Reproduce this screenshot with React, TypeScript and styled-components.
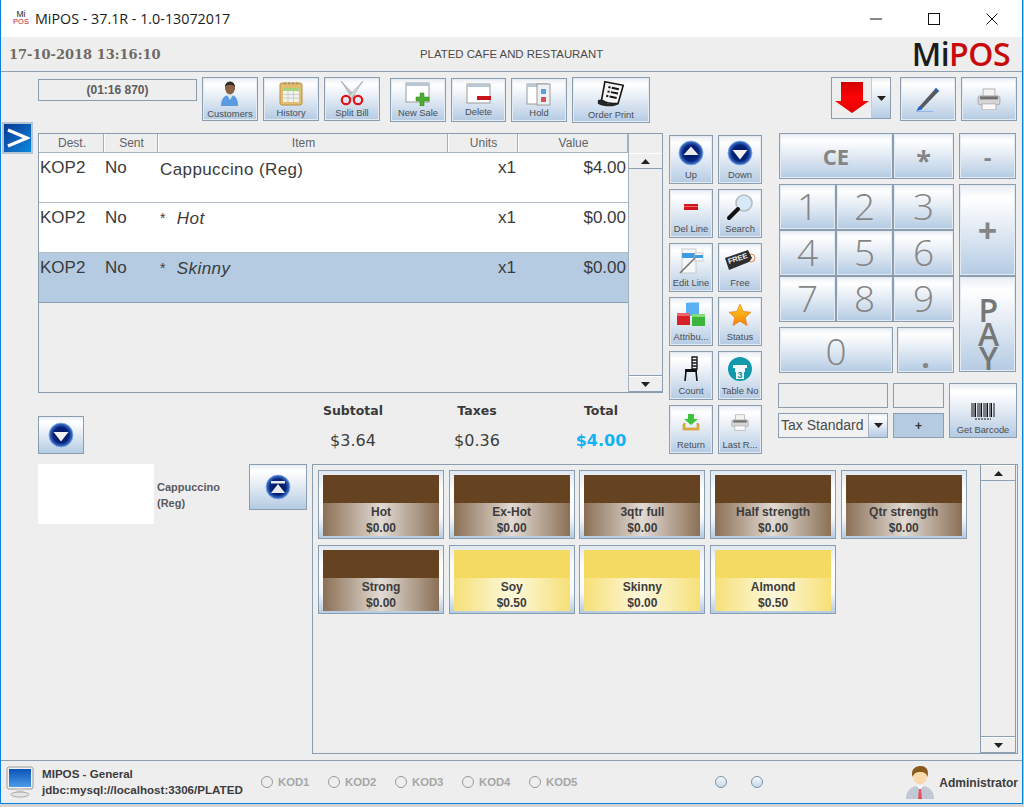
import styled, { createGlobalStyle } from "styled-components";

const GlobalStyle = createGlobalStyle`
  html, body {
    margin: 0;
    padding: 0;
    background: #d4d4d4;
    overflow: hidden;
  }
  * {
    box-sizing: border-box;
  }
`;

const blueGradient = `linear-gradient(180deg, #e9eef4 0%, #ffffff 14%, #e6edf5 45%, #b4cbe3 100%)`;
const edge = "#8b9eb0";

// ---------- icons ----------
function Orb({ dir }: { dir: "up" | "down" | "top" }) {
  return (
    <svg width="26" height="26" viewBox="0 0 26 26">
      <defs>
        <radialGradient id={`orb-${dir}`} cx="0.5" cy="0.5" r="0.55">
          <stop offset="0" stopColor="#02125a" />
          <stop offset="0.6" stopColor="#06247c" />
          <stop offset="1" stopColor="#5a9bf0" />
        </radialGradient>
      </defs>
      <circle cx="13" cy="13" r="12" fill={`url(#orb-${dir})`} stroke="#7da6e6" strokeWidth="0.8" />
      {dir === "up" && <path d="M13 6.5 L20.5 15 H5.5 Z" fill="#e9e9e9" />}
      {dir === "down" && <path d="M13 19.5 L20.5 10 H5.5 Z" fill="#f2f2f2" />}
      {dir === "top" && (
        <>
          <rect x="6" y="7" width="14" height="2.5" fill="#e9e9e9" />
          <path d="M13 10 L20 19 H6 Z" fill="#e9e9e9" />
        </>
      )}
    </svg>
  );
}

function CustomerIcon() {
  return (
    <svg width="24" height="28" viewBox="0 0 24 28">
      <path d="M3 27 C3 19 7 16 12 16 C17 16 20 19 20 27 Z" fill="#5a9ade" />
      <path d="M9 16 L12 21 L15 16 Z" fill="#d7e6f5" />
      <ellipse cx="12" cy="9" rx="5" ry="6.5" fill="#8c6244" />
      <path d="M7 8 C7 1 17 1 17 8 C15 5 9 5 7 8 Z" fill="#2e2a28" />
    </svg>
  );
}

function HistoryIcon() {
  return (
    <svg width="24" height="25" viewBox="0 0 24 25">
      <rect x="1" y="2" width="22" height="22" rx="2" fill="#e2bd70" stroke="#b88f45" />
      <rect x="4" y="7" width="16" height="14" fill="#f4f2e4" />
      <rect x="4" y="7" width="16" height="3" fill="#a6d37d" />
      <path d="M4 13.5 H20 M4 17 H20 M9 10 V21 M14.5 10 V21" stroke="#b8c7d8" strokeWidth="0.8" />
      <path d="M6 1 V4 M10 1 V4 M14 1 V4 M18 1 V4" stroke="#9b8a66" strokeWidth="1" />
    </svg>
  );
}

function ScissorsIcon() {
  return (
    <svg width="26" height="26" viewBox="0 0 26 26">
      <path d="M2 1 L17 17 L13.5 18.5 Z" fill="#c4c8cc" stroke="#85898d" strokeWidth="0.5" />
      <path d="M24 1 L9 17 L12.5 18.5 Z" fill="#d8dbde" stroke="#85898d" strokeWidth="0.5" />
      <circle cx="7" cy="20" r="4.2" fill="none" stroke="#e0141a" strokeWidth="2.2" />
      <circle cx="19" cy="20" r="4.2" fill="none" stroke="#e0141a" strokeWidth="2.2" />
    </svg>
  );
}

function WindowPlusIcon() {
  return (
    <svg width="26" height="24" viewBox="0 0 26 24">
      <rect x="1" y="1" width="23" height="19" fill="#fff" stroke="#9a9a9a" />
      <rect x="1" y="1" width="23" height="3" fill="#b9c6d4" />
      <path d="M15 11 H19 V15 H24 V19 H19 V24 H15 V19 H11 V15 H15 Z" fill="#4cae32" stroke="#2f7d1d" strokeWidth="0.5" />
    </svg>
  );
}

function WindowMinusIcon() {
  return (
    <svg width="26" height="22" viewBox="0 0 26 22">
      <rect x="1" y="1" width="23" height="19" fill="#fff" stroke="#9a9a9a" />
      <rect x="1" y="1" width="23" height="3" fill="#b9c6d4" />
      <rect x="11" y="13" width="14" height="4" fill="#c8141c" />
    </svg>
  );
}

function HoldIcon() {
  return (
    <svg width="26" height="24" viewBox="0 0 26 24">
      <rect x="1" y="2" width="20" height="20" fill="#fff" stroke="#9a9a9a" />
      <rect x="1" y="2" width="23" height="3" fill="#b9c6d4" />
      <rect x="11" y="2" width="13" height="21" fill="#eef1f4" stroke="#9a9a9a" />
      <rect x="15" y="7" width="5" height="5" fill="#5aa0dc" />
      <rect x="15" y="15" width="5" height="5" fill="#d8505a" />
    </svg>
  );
}

function ReceiptIcon() {
  return (
    <svg width="30" height="28" viewBox="0 0 32 32">
      <path d="M9 2 L30 6 L24 27 C18 27 10 26 5 24 Z" fill="#f5f5f5" stroke="#151515" strokeWidth="1.8" />
      <path d="M1 23 C6 21 10 24 12 27 L24 27 C22 31 8 31 1 27 Z" fill="#252525" />
      <path d="M13 8 L25 10.5 M12 13 L24 15.5 M10.5 18 L22.5 20.5" stroke="#151515" strokeWidth="2.2" strokeDasharray="2.5 1.5 9 0" />
    </svg>
  );
}

function RedArrow() {
  return (
    <svg width="34" height="32" viewBox="0 0 34 32">
      <defs>
        <linearGradient id="red-arrow" x1="0" y1="0" x2="0" y2="1">
          <stop offset="0" stopColor="#d30000" />
          <stop offset="0.5" stopColor="#fb0505" />
          <stop offset="1" stopColor="#e50000" />
        </linearGradient>
      </defs>
      <path d="M6 0 H28 V19 H34 L17 31 L0 19 H6 Z" fill="url(#red-arrow)" />
    </svg>
  );
}

function PencilIcon() {
  return (
    <svg width="26" height="26" viewBox="0 0 26 26">
      <path d="M3 22 L21 2 L24 5 L6 24 Z" fill="#565b63" />
      <path d="M21 2 L24 5 L22.5 6.5 L19.5 3.6 Z" fill="#1f62c8" />
      <path d="M3 22 L5 20 L6.5 23.5 L1.5 25 Z" fill="#1f62d8" />
      <path d="M1 25.4 H18" stroke="#8db2ea" strokeWidth="1" />
    </svg>
  );
}

function PrinterIcon({ size }: { size: number }) {
  return (
    <svg width={size} height={size * 0.95} viewBox="0 0 24 23">
      <rect x="6" y="1" width="12" height="8" fill="#f3f3f3" stroke="#b5b5b5" />
      <rect x="1" y="8" width="22" height="9" rx="2" fill="#d5d5d5" stroke="#a8a8a8" />
      <rect x="3" y="8.5" width="18" height="3" fill="#6f6f6f" />
      <rect x="5" y="16" width="14" height="6" fill="#fafafa" stroke="#b5b5b5" />
    </svg>
  );
}

function DelLineIcon() {
  return (
    <svg width="16" height="8" viewBox="0 0 16 8">
      <rect x="1" y="1" width="14" height="6" fill="#d3161c" />
      <rect x="1" y="3" width="14" height="1" fill="#f0696d" />
    </svg>
  );
}

function SearchIcon() {
  return (
    <svg width="28" height="28" viewBox="0 0 28 28">
      <circle cx="18" cy="10" r="8" fill="#d6e9f7" stroke="#b8bcc0" strokeWidth="1.6" />
      <path d="M12 16 L3 25" stroke="#111" strokeWidth="4" strokeLinecap="round" />
    </svg>
  );
}

function EditLineIcon() {
  return (
    <svg width="26" height="26" viewBox="0 0 26 26">
      <rect x="4" y="1" width="14" height="24" fill="#f4f6f8" stroke="#c8ccd0" />
      <rect x="4" y="5" width="14" height="5" fill="#3f9be0" />
      <rect x="17" y="5" width="8" height="8" fill="#f4f6f8" stroke="#c8ccd0" />
      <rect x="17" y="7" width="8" height="3" fill="#3f9be0" />
      <path d="M2 25 L17 10" stroke="#777" strokeWidth="1.6" />
    </svg>
  );
}

const TagText = styled.text`
  font-family: "Liberation Sans", Arial, sans-serif;
  font-size: 7.5px;
  font-weight: 700;
  fill: #f2f2f2;
`;

function FreeIcon() {
  return (
    <svg width="32" height="24" viewBox="0 0 32 24">
      <circle cx="27" cy="9" r="4" fill="none" stroke="#e68a4a" strokeWidth="1" />
      <path d="M1 9 L24 1 L28 9 L25 13 L5 21 Z" fill="#2e2e2e" />
      <TagText x="5" y="15" transform="rotate(-18 5 15)">FREE</TagText>
    </svg>
  );
}

function CubesIcon() {
  return (
    <svg width="30" height="26" viewBox="0 0 30 26">
      <rect x="10" y="1" width="13" height="13" fill="#5ab0f0" />
      <path d="M10 1 L14 0 H24 L23 1 Z" fill="#9ad2f8" />
      <rect x="1" y="11" width="13" height="12" fill="#d82028" />
      <rect x="16" y="12" width="13" height="12" fill="#3cb43c" />
      <rect x="1" y="11" width="13" height="3" fill="#f0656b" />
      <rect x="16" y="12" width="13" height="3" fill="#84dc7c" />
    </svg>
  );
}

function StarIcon() {
  return (
    <svg width="24" height="24" viewBox="0 0 24 24">
      <defs>
        <linearGradient id="star-fill" x1="0" y1="0" x2="0" y2="1">
          <stop offset="0" stopColor="#ffd21e" />
          <stop offset="1" stopColor="#f77f0a" />
        </linearGradient>
      </defs>
      <path d="M12 1 L15.3 8.5 L23 9.2 L17.2 14.4 L19 22.5 L12 18.2 L5 22.5 L6.8 14.4 L1 9.2 L8.7 8.5 Z" fill="url(#star-fill)" stroke="#e26d0a" strokeWidth="0.6" />
    </svg>
  );
}

function ChairIcon() {
  return (
    <svg width="18" height="25" viewBox="0 0 18 25">
      <path d="M10 1 H15 V13 H10 Z M10 4 H15 M10 7 H15 M10 10 H15" fill="none" stroke="#111" strokeWidth="1.3" />
      <path d="M3 13 H15 V16 H3 Z" fill="#111" />
      <path d="M4 15 L3 25 M14 15 L15 25" stroke="#111" strokeWidth="1.6" />
    </svg>
  );
}

const BadgeText = styled.text`
  font-family: "Liberation Sans", Arial, sans-serif;
  font-size: 9px;
  font-weight: 700;
  fill: #0e8fa0;
`;

function TableIcon() {
  return (
    <svg width="24" height="24" viewBox="0 0 24 24">
      <circle cx="12" cy="12" r="12" fill="#129aab" />
      <path d="M5 8 H19 V11 H17 V15 H7 V11 H5 Z" fill="#eef8fa" />
      <rect x="8" y="13" width="8" height="9" fill="#eef8fa" />
      <BadgeText x="9.5" y="21">3</BadgeText>
    </svg>
  );
}

function ReturnIcon() {
  return (
    <svg width="18" height="17" viewBox="0 0 18 17">
      <path d="M6 0 H12 V5 H16 L9 11 L2 5 H6 Z" fill="#3dc43a" />
      <path d="M1 10 L3 9 V14 H15 V9 L17 10 V16 H1 Z" fill="#e8b23c" stroke="#b58519" strokeWidth="0.5" />
    </svg>
  );
}

function BarcodeIcon() {
  return (
    <svg width="24" height="17" viewBox="0 0 24 17">
      <path
        d="M1 0 V14 M3 0 V14 M4.5 0 V14 M7 0 V14 M9 0 V14 M10.5 0 V14 M13 0 V14 M15 0 V14 M16.5 0 V14 M19 0 V14 M20.5 0 V14 M23 0 V14"
        stroke="#111"
        strokeWidth="1"
      />
      <path d="M4 16 H20" stroke="#555" strokeWidth="1.5" strokeDasharray="2 1" />
    </svg>
  );
}

function MonitorIcon() {
  return (
    <svg width="28" height="32" viewBox="0 0 28 32">
      <defs>
        <linearGradient id="screen" x1="0" y1="0" x2="0" y2="1">
          <stop offset="0" stopColor="#0b52b8" />
          <stop offset="1" stopColor="#4d9be8" />
        </linearGradient>
      </defs>
      <rect x="1" y="1" width="26" height="22" rx="2" fill="#f2f2f2" stroke="#9a9a9a" />
      <rect x="3" y="3" width="22" height="18" fill="url(#screen)" />
      <path d="M11 23 H17 L18 27 H10 Z" fill="#d5d5d5" />
      <ellipse cx="14" cy="28.5" rx="9" ry="2.5" fill="#e6e6e6" stroke="#a8a8a8" />
    </svg>
  );
}

function AdminIcon() {
  return (
    <svg width="30" height="33" viewBox="0 0 30 33">
      <path d="M1 33 C1 24 6 20 15 20 C24 20 29 24 29 33 Z" fill="#c0c8d6" />
      <path d="M12 20 H18 L15 24 Z" fill="#fff" />
      <path d="M14 23 H16 L17 33 H13 Z" fill="#e8505c" />
      <ellipse cx="15" cy="10" rx="7" ry="8.5" fill="#fbd9ac" />
      <path d="M7.5 11 C5 2 12 0 16 0 C22 0 24 5 22.5 11 C21.5 7 19 5.5 14 6 C10 6.5 9 8 7.5 11 Z" fill="#8a5a1e" />
    </svg>
  );
}

function Caret({ dir = "down" }: { dir?: "up" | "down" }) {
  return (
    <svg width="9" height="5" viewBox="0 0 9 5">
      <path d={dir === "up" ? "M4.5 0 L9 5 H0 Z" : "M4.5 5 L9 0 H0 Z"} fill="#222" />
    </svg>
  );
}

// ---------- data ----------
const topTools = [
  { label: "Customers", icon: <CustomerIcon />, w: 56, h: 44, top: 0 },
  { label: "History", icon: <HistoryIcon />, w: 56, h: 44, top: 0 },
  { label: "Split Bill", icon: <ScissorsIcon />, w: 56, h: 44, top: 0 },
];

const orderTools = [
  { label: "New Sale", icon: <WindowPlusIcon />, w: 56, h: 44, top: 1 },
  { label: "Delete", icon: <WindowMinusIcon />, w: 55, h: 44, top: 1 },
  { label: "Hold", icon: <HoldIcon />, w: 56, h: 44, top: 1 },
  { label: "Order Print", icon: <ReceiptIcon />, w: 78, h: 46, top: 0 },
];

const rows = [
  { name: "Cappuccino (Reg)", value: "$4.00", modifier: false, selected: false },
  { name: "Hot", value: "$0.00", modifier: true, selected: false },
  { name: "Skinny", value: "$0.00", modifier: true, selected: true },
];

const actions = [
  { label: "Up", icon: <Orb dir="up" /> },
  { label: "Down", icon: <Orb dir="down" /> },
  { label: "Del Line", icon: <DelLineIcon /> },
  { label: "Search", icon: <SearchIcon /> },
  { label: "Edit Line", icon: <EditLineIcon /> },
  { label: "Free", icon: <FreeIcon /> },
  { label: "Attribu...", icon: <CubesIcon /> },
  { label: "Status", icon: <StarIcon /> },
  { label: "Count", icon: <ChairIcon /> },
  { label: "Table No", icon: <TableIcon /> },
  { label: "Return", icon: <ReturnIcon /> },
  { label: "Last R...", icon: <PrinterIcon size={18} /> },
];

const products = [
  { name: "Hot", price: "$0.00", tone: "brown" },
  { name: "Ex-Hot", price: "$0.00", tone: "brown" },
  { name: "3qtr full", price: "$0.00", tone: "brown" },
  { name: "Half strength", price: "$0.00", tone: "brown" },
  { name: "Qtr strength", price: "$0.00", tone: "brown" },
  { name: "Strong", price: "$0.00", tone: "brown" },
  { name: "Soy", price: "$0.50", tone: "yellow" },
  { name: "Skinny", price: "$0.00", tone: "yellow" },
  { name: "Almond", price: "$0.50", tone: "yellow" },
];

export default function App() {
  return (
    <>
      <GlobalStyle />
      <Page>
        <Window>
          <TitleBar>
            <AppIcon>
              <span>Mi</span>
              <b>POS</b>
            </AppIcon>
            <TitleText>MiPOS - 37.1R - 1.0-13072017</TitleText>
            <WindowControls>
              <svg width="14" height="14" viewBox="0 0 14 14">
                <path d="M1 7 H13" stroke="#111" strokeWidth="1" />
              </svg>
              <svg width="14" height="14" viewBox="0 0 14 14">
                <rect x="1.5" y="1.5" width="11" height="11" fill="none" stroke="#111" strokeWidth="1" />
              </svg>
              <svg width="14" height="14" viewBox="0 0 14 14">
                <path d="M1.5 1.5 L12.5 12.5 M12.5 1.5 L1.5 12.5" stroke="#111" strokeWidth="1" />
              </svg>
            </WindowControls>
          </TitleBar>

          <Header>
            <DateText>17-10-2018 13:16:10</DateText>
            <ShopName>PLATED CAFE AND RESTAURANT</ShopName>
            <Logo>
              Mi<em>POS</em>
            </Logo>
          </Header>

          <TopArea>
            <SideColumn>
              <FlyoutButton>
                <svg width="24" height="20" viewBox="0 0 24 20">
                  <path d="M2 2 L21 10 L2 18" fill="none" stroke="#fff" strokeWidth="3.4" />
                </svg>
              </FlyoutButton>
            </SideColumn>

            <CenterColumn>
              <Toolbar>
                <Timer>(01:16 870)</Timer>
                {topTools.map((t) => (
                  <ToolButton key={t.label} $w={t.w} $h={t.h} $top={t.top}>
                    {t.icon}
                    <ButtonLabel>{t.label}</ButtonLabel>
                  </ToolButton>
                ))}
                <ToolGap />
                {orderTools.map((t) => (
                  <ToolButton key={t.label} $w={t.w} $h={t.h} $top={t.top}>
                    {t.icon}
                    <ButtonLabel>{t.label}</ButtonLabel>
                  </ToolButton>
                ))}
              </Toolbar>

              <OrderTable>
                <OrderMain>
                  <HeadRow>
                    <HeadCell>Dest.</HeadCell>
                    <HeadCell>Sent</HeadCell>
                    <HeadCell>Item</HeadCell>
                    <HeadCell>Units</HeadCell>
                    <HeadCell>Value</HeadCell>
                  </HeadRow>
                  {rows.map((r) => (
                    <OrderRow key={r.name} $selected={r.selected}>
                      <Cell>KOP2</Cell>
                      <Cell>No</Cell>
                      <ItemCell $modifier={r.modifier}>
                        {r.modifier && <Star>*</Star>}
                        {r.name}
                      </ItemCell>
                      <Cell $right>x1</Cell>
                      <Cell $right>{r.value}</Cell>
                    </OrderRow>
                  ))}
                </OrderMain>
                <ScrollBar>
                  <ScrollHead />
                  <ScrollStep>
                    <Caret dir="up" />
                  </ScrollStep>
                  <ScrollTrack />
                  <ScrollStep>
                    <Caret />
                  </ScrollStep>
                </ScrollBar>
              </OrderTable>

              <SummaryRow>
                <CollapseButton>
                  <Orb dir="down" />
                </CollapseButton>
                <Totals>
                  <TotalBlock>
                    <TotalLabel>Subtotal</TotalLabel>
                    <TotalValue>$3.64</TotalValue>
                  </TotalBlock>
                  <TotalBlock>
                    <TotalLabel>Taxes</TotalLabel>
                    <TotalValue>$0.36</TotalValue>
                  </TotalBlock>
                  <TotalBlock>
                    <TotalLabel>Total</TotalLabel>
                    <TotalValue $accent>$4.00</TotalValue>
                  </TotalBlock>
                </Totals>
              </SummaryRow>
            </CenterColumn>

            <ActionGrid>
              {actions.map((a) => (
                <ActionButton key={a.label}>
                  <ActionIcon>{a.icon}</ActionIcon>
                  <ButtonLabel>{a.label}</ButtonLabel>
                </ActionButton>
              ))}
            </ActionGrid>

            <KeypadColumn>
              <RightTools>
                <SplitButton>
                  <SplitMain>
                    <RedArrow />
                  </SplitMain>
                  <SplitCaret>
                    <Caret />
                  </SplitCaret>
                </SplitButton>
                <ToolButton $w={56} $h={44} $top={0}>
                  <PencilIcon />
                </ToolButton>
                <ToolButton $w={56} $h={44} $top={0}>
                  <PrinterIcon size={24} />
                </ToolButton>
              </RightTools>

              <Keypad>
                <KeyColumn>
                  <KeyRow>
                    <Key $w={114} $h={46} $size={22} $bold>
                      CE
                    </Key>
                    <Key $w={61} $h={46} $size={27} $bold $dy={6}>
                      *
                    </Key>
                  </KeyRow>
                  <DigitGrid>
                    {["1", "2", "3", "4", "5", "6", "7", "8", "9"].map((d) => (
                      <Digit key={d}>{d}</Digit>
                    ))}
                  </DigitGrid>
                  <KeyRow $gap={4}>
                    <Key $w={114} $h={46} $size={37}>
                      0
                    </Key>
                    <Key $w={57} $h={46} $size={30} $bold $dy={12}>
                      .
                    </Key>
                  </KeyRow>
                </KeyColumn>
                <OpColumn>
                  <Key $w={57} $h={46} $size={24} $bold>
                    -
                  </Key>
                  <Key $w={57} $h={92} $size={34} $bold $top={5}>
                    +
                  </Key>
                  <PayKey>PAY</PayKey>
                </OpColumn>
              </Keypad>

              <TaxGrid>
                <EmptyField />
                <EmptyField />
                <BarcodeButton>
                  <BarcodeIcon />
                  <ButtonLabel>Get Barcode</ButtonLabel>
                </BarcodeButton>
                <TaxSelect>
                  <TaxValue>Tax Standard</TaxValue>
                  <TaxCaret>
                    <Caret />
                  </TaxCaret>
                </TaxSelect>
                <PlusButton>+</PlusButton>
              </TaxGrid>
            </KeypadColumn>
          </TopArea>

          <LowerArea>
            <ItemInfo>
              <ItemPicture />
              <ItemName>
                Cappuccino
                <br />
                (Reg)
              </ItemName>
              <TopButton>
                <Orb dir="top" />
              </TopButton>
            </ItemInfo>
            <ProductPanel>
              <ProductGrid>
                {products.map((p) => (
                  <ProductCard key={p.name}>
                    <CardBand $tone={p.tone} />
                    <CardBody $tone={p.tone}>
                      <span>{p.name}</span>
                      <span>{p.price}</span>
                    </CardBody>
                  </ProductCard>
                ))}
              </ProductGrid>
              <PanelScroll>
                <ScrollStep>
                  <Caret dir="up" />
                </ScrollStep>
                <ScrollTrack />
                <ScrollStep>
                  <Caret />
                </ScrollStep>
              </PanelScroll>
            </ProductPanel>
          </LowerArea>

          <StatusBar>
            <MonitorIcon />
            <HostInfo>
              <div>MIPOS - General</div>
              <div>jdbc:mysql://localhost:3306/PLATED</div>
            </HostInfo>
            <KodList>
              {["KOD1", "KOD2", "KOD3", "KOD4", "KOD5"].map((k) => (
                <Kod key={k}>
                  <KodRadio />
                  {k}
                </Kod>
              ))}
            </KodList>
            <Lamps>
              <Lamp />
              <Lamp />
            </Lamps>
            <AdminBlock>
              <AdminIcon />
              <AdminName>Administrator</AdminName>
            </AdminBlock>
          </StatusBar>
        </Window>
      </Page>
    </>
  );
}

// ---------- styles ----------
const Page = styled.div`
  width: 1024px;
  height: 807px;
  overflow: hidden;
  background: linear-gradient(180deg, #c4c4c4 99%, #d8d8d8 100%);
`;

const Window = styled.div`
  width: 1023px;
  height: 804px;
  background: #eeeeee;
  border-left: 1px solid #0a7fdc;
  border-right: 1px solid #0a7fdc;
  border-bottom: 1px solid #0a7fdc;
  display: flex;
  flex-direction: column;
  font-family: "Liberation Sans", Arial, sans-serif;
`;

const TitleBar = styled.div`
  height: 37px;
  flex: none;
  background: #ffffff;
  display: flex;
  align-items: center;
  padding-left: 12px;
`;

const AppIcon = styled.div`
  width: 16px;
  height: 17px;
  margin-right: 6px;
  display: flex;
  flex-direction: column;
  align-items: center;
  font-size: 8.5px;
  line-height: 8px;
  color: #222;
  b {
    font-weight: 400;
    color: #c4141c;
    font-size: 7.5px;
  }
`;

const TitleText = styled.div`
  font-family: "Open Sans", sans-serif;
  font-size: 14.3px;
  color: #1a1a1a;
  white-space: nowrap;
`;

const WindowControls = styled.div`
  margin-left: auto;
  display: flex;
  align-items: center;
  gap: 44px;
  padding-right: 23px;
`;

const Header = styled.div`
  height: 35px;
  flex: none;
  border-bottom: 1px solid #8ba0b2;
  display: flex;
  align-items: center;
  padding: 0 12px 0 8px;
`;

const DateText = styled.div`
  width: 411px;
  font-family: "DejaVu Serif", serif;
  font-weight: 700;
  font-size: 13px;
  color: #6e6a64;
  white-space: nowrap;
`;

const ShopName = styled.div`
  font-size: 11.4px;
  color: #4b4b4b;
  white-space: nowrap;
`;

const Logo = styled.div`
  margin-left: auto;
  font-family: "Open Sans", sans-serif;
  font-weight: 600;
  font-size: 32px;
  line-height: 34px;
  letter-spacing: -0.5px;
  color: #1c1c1c;
  em {
    font-style: normal;
    color: #c80a0a;
  }
`;

const TopArea = styled.div`
  height: 392px;
  flex: none;
  display: flex;
`;

const SideColumn = styled.div`
  width: 37px;
  flex: none;
  padding: 50px 0 0 1px;
`;

const FlyoutButton = styled.div`
  width: 31px;
  height: 32px;
  background: linear-gradient(135deg, #083a94 0%, #0b5fb8 50%, #0a8be0 100%);
  border: 2px solid #b5c5d5;
  display: flex;
  align-items: center;
  justify-content: center;
`;

const CenterColumn = styled.div`
  width: 625px;
  flex: none;
  padding-top: 5px;
`;

const Toolbar = styled.div`
  height: 46px;
  display: flex;
  align-items: flex-start;
  gap: 5px;
`;

const ToolGap = styled.div`
  width: 0;
`;

const Timer = styled.div`
  width: 159px;
  height: 22px;
  margin-top: 2px;
  border: 1px solid ${edge};
  font-size: 12px;
  font-weight: 700;
  color: #5c5c5c;
  display: flex;
  align-items: center;
  justify-content: center;
`;

const ToolButton = styled.div<{ $w: number; $h: number; $top: number }>`
  width: ${(p) => p.$w}px;
  height: ${(p) => p.$h}px;
  margin-top: ${(p) => p.$top}px;
  flex: none;
  border: 1px solid ${edge};
  box-shadow: inset 0 0 0 1px #e3eaf1;
  background: ${blueGradient};
  display: flex;
  flex-direction: column;
  align-items: center;
  justify-content: center;
  gap: 1px;
  overflow: hidden;
`;

const ButtonLabel = styled.div`
  font-size: 9.4px;
  line-height: 11px;
  color: #4a4e54;
  white-space: nowrap;
`;

const OrderTable = styled.div`
  margin-top: 10px;
  height: 260px;
  border: 1px solid ${edge};
  display: flex;
`;

const OrderMain = styled.div`
  width: 589px;
  flex: none;
  background: #eeeeee;
`;

const gridColumns = "65px 54px 290px 70px 110px";

const HeadRow = styled.div`
  display: grid;
  grid-template-columns: ${gridColumns};
  height: 19px;
`;

const HeadCell = styled.div`
  font-size: 12px;
  color: #5e6368;
  display: flex;
  align-items: center;
  justify-content: center;
  padding-left: 2px;
  border-right: 1px solid #a3b2c0;
  border-bottom: 1px solid #a3b2c0;
  box-shadow: inset 1px 0 0 #fff;
`;

const OrderRow = styled.div<{ $selected: boolean }>`
  display: grid;
  grid-template-columns: ${gridColumns};
  height: 50px;
  background: ${(p) => (p.$selected ? "#b4cbe2" : "#ffffff")};
  border-bottom: 1px solid ${(p) => (p.$selected ? "#8ba0b2" : "#b3bfca")};
`;

const Cell = styled.div<{ $right?: boolean }>`
  font-size: 17px;
  line-height: 20px;
  padding: 5px 2px 0 ${(p) => (p.$right ? "2px" : "1px")};
  color: #3b3b3b;
  text-align: ${(p) => (p.$right ? "right" : "left")};
  white-space: nowrap;
`;

const ItemCell = styled(Cell)<{ $modifier: boolean }>`
  font-size: 17px;
  letter-spacing: 0.4px;
  font-style: ${(p) => (p.$modifier ? "italic" : "normal")};
  padding-left: 2px;
  padding-top: ${(p) => (p.$modifier ? "5px" : "7px")};
`;

const Star = styled.span`
  font-style: normal;
  font-size: 14px;
  margin-right: 11px;
  vertical-align: 1px;
`;

const ScrollBar = styled.div`
  flex: 1;
  display: flex;
  flex-direction: column;
  border-left: 1px solid #a3b2c0;
`;

const ScrollHead = styled.div`
  height: 19px;
  flex: none;
`;

const ScrollStep = styled.div`
  height: 16px;
  flex: none;
  background: #efefef;
  border-top: 1px solid #ffffff;
  border-bottom: 1px solid #8ba0b2;
  display: flex;
  align-items: center;
  justify-content: center;
`;

const ScrollTrack = styled.div`
  flex: 1;
  background: #eeeeee;
  border-bottom: 1px solid #8ba0b2;
`;

const SummaryRow = styled.div`
  display: flex;
  align-items: flex-start;
  padding-top: 10px;
  height: 67px;
`;

const CollapseButton = styled.div`
  width: 46px;
  height: 38px;
  margin-top: 13px;
  flex: none;
  border: 1px solid ${edge};
  background: ${blueGradient};
  display: flex;
  align-items: center;
  justify-content: center;
`;

const Totals = styled.div`
  display: grid;
  grid-template-columns: 124px 124px 124px;
  margin-left: 207px;
`;

const TotalBlock = styled.div`
  display: flex;
  flex-direction: column;
  align-items: center;
  gap: 11px;
`;

const TotalLabel = styled.div`
  font-family: "DejaVu Sans", sans-serif;
  font-size: 12.5px;
  font-weight: 700;
  line-height: 16px;
  color: #3a3a3a;
`;

const TotalValue = styled.div<{ $accent?: boolean }>`
  font-family: "DejaVu Sans", sans-serif;
  font-size: 16px;
  line-height: 22px;
  font-weight: ${(p) => (p.$accent ? 700 : 400)};
  color: ${(p) => (p.$accent ? "#10b4f4" : "#3e3e3e")};
`;

const ActionGrid = styled.div`
  width: 93px;
  flex: none;
  margin: 63px 0 0 6px;
  display: grid;
  grid-template-columns: 44px 44px;
  grid-auto-rows: 49px;
  gap: 5px;
  align-content: start;
`;

const ActionButton = styled.div`
  border: 1px solid ${edge};
  box-shadow: inset 0 0 0 1px #e3eaf1;
  background: ${blueGradient};
  display: flex;
  flex-direction: column;
  align-items: center;
  overflow: hidden;
  padding-bottom: 3px;
`;

const ActionIcon = styled.div`
  flex: 1;
  display: flex;
  align-items: center;
  justify-content: center;
`;

const KeypadColumn = styled.div`
  width: 238px;
  flex: none;
  margin-left: 17px;
`;

const RightTools = styled.div`
  height: 61px;
  padding-top: 5px;
  display: flex;
  align-items: flex-start;
  justify-content: flex-end;
  gap: 5px;
`;

const SplitButton = styled.div`
  width: 60px;
  height: 42px;
  margin-right: 4px;
  border: 1px solid ${edge};
  display: flex;
`;

const SplitMain = styled.div`
  width: 40px;
  background: #eeeeee;
  display: flex;
  align-items: center;
  justify-content: center;
  border-right: 1px solid #c0ccd8;
`;

const SplitCaret = styled.div`
  flex: 1;
  background: ${blueGradient};
  display: flex;
  align-items: center;
  justify-content: center;
`;

const Keypad = styled.div`
  display: flex;
  gap: 5px;
`;

const KeyColumn = styled.div`
  width: 175px;
  flex: none;
  display: flex;
  flex-direction: column;
  gap: 5px;
`;

const KeyRow = styled.div<{ $gap?: number }>`
  display: flex;
  gap: ${(p) => p.$gap ?? 0}px;
`;

const keyFace = `
  border: 1px solid ${edge};
  box-shadow: inset 0 0 0 1px #e3eaf1;
  background: ${blueGradient};
  color: #858585;
  display: flex;
  align-items: center;
  justify-content: center;
`;

const Key = styled.div<{ $w: number; $h: number; $size: number; $bold?: boolean; $top?: number; $dy?: number }>`
  ${keyFace}
  width: ${(p) => p.$w}px;
  height: ${(p) => p.$h}px;
  margin-top: ${(p) => p.$top ?? 0}px;
  padding-top: ${(p) => p.$dy ?? 0}px;
  font-family: "Open Sans", sans-serif;
  font-size: ${(p) => p.$size}px;
  font-weight: ${(p) => (p.$bold ? 700 : 300)};
`;

const DigitGrid = styled.div`
  display: grid;
  grid-template-columns: 57px 57px 61px;
  grid-auto-rows: 46px;
`;

const Digit = styled.div`
  ${keyFace}
  padding-bottom: 3px;
  font-family: "Open Sans", sans-serif;
  font-size: 37px;
  font-weight: 300;
`;

const OpColumn = styled.div`
  width: 57px;
  flex: none;
  display: flex;
  flex-direction: column;
`;

const PayKey = styled.div`
  ${keyFace}
  height: 96px;
  writing-mode: vertical-rl;
  text-orientation: upright;
  font-family: "Open Sans", sans-serif;
  font-size: 32px;
  font-weight: 600;
  line-height: 1;
  letter-spacing: -19px;
  color: #777;
`;

const TaxGrid = styled.div`
  margin: 10px 0 0 -1px;
  display: grid;
  grid-template-columns: 110px 51px 68px;
  grid-template-rows: 25px 25px;
  gap: 5px;
`;

const EmptyField = styled.div`
  border: 1px solid ${edge};
  background: #eeeeee;
`;

const BarcodeButton = styled.div`
  grid-row: span 2;
  border: 1px solid ${edge};
  background: ${blueGradient};
  display: flex;
  flex-direction: column;
  align-items: center;
  justify-content: flex-end;
  gap: 4px;
  padding-bottom: 2px;
`;

const TaxSelect = styled.div`
  border: 1px solid ${edge};
  display: flex;
`;

const TaxValue = styled.div`
  flex: 1;
  font-size: 14px;
  line-height: 23px;
  padding-left: 2px;
  color: #4b4b4b;
  white-space: nowrap;
  background: #f1f1f1;
`;

const TaxCaret = styled.div`
  width: 19px;
  flex: none;
  border-left: 1px solid #a3b2c0;
  background: ${blueGradient};
  display: flex;
  align-items: center;
  justify-content: center;
`;

const PlusButton = styled.div`
  border: 1px solid ${edge};
  background: #b4cbe2;
  font-size: 12px;
  font-weight: 700;
  color: #333;
  display: flex;
  align-items: center;
  justify-content: center;
`;

const LowerArea = styled.div`
  height: 290px;
  flex: none;
  display: flex;
  padding-left: 37px;
`;

const ItemInfo = styled.div`
  width: 274px;
  flex: none;
  display: flex;
  align-items: flex-start;
`;

const ItemPicture = styled.div`
  width: 116px;
  height: 60px;
  flex: none;
  background: #ffffff;
`;

const ItemName = styled.div`
  width: 95px;
  flex: none;
  padding: 15px 0 0 3px;
  font-size: 11px;
  font-weight: 700;
  line-height: 16px;
  color: #5a5a5e;
`;

const TopButton = styled.div`
  width: 58px;
  height: 46px;
  flex: none;
  border: 1px solid ${edge};
  background: ${blueGradient};
  display: flex;
  align-items: center;
  justify-content: center;
`;

const ProductPanel = styled.div`
  width: 706px;
  flex: none;
  border: 1px solid ${edge};
  display: flex;
`;

const ProductGrid = styled.div`
  flex: 1;
  padding: 5px;
  display: grid;
  grid-template-columns: repeat(5, 126px);
  grid-auto-rows: 69px;
  column-gap: 4.7px;
  row-gap: 6px;
  align-content: start;
`;

const ProductCard = styled.div`
  border: 1px solid ${edge};
  padding: 4px 4px 4px 4px;
  background: linear-gradient(180deg, #dfe8f1 0%, #ffffff 30%, #f6f9fc 70%, #b4cbe2 100%);
  display: flex;
  flex-direction: column;
`;

const CardBand = styled.div<{ $tone: string }>`
  height: 28px;
  flex: none;
  background: ${(p) => (p.$tone === "brown" ? "#654321" : "#f5da62")};
`;

const CardBody = styled.div<{ $tone: string }>`
  flex: 1;
  padding-top: 1px;
  background: ${(p) =>
    p.$tone === "brown"
      ? "linear-gradient(90deg, #8b7056 0%, #e2dbd4 50%, #8b7056 100%)"
      : "linear-gradient(90deg, #f6e078 0%, #fdf8dc 50%, #f6e078 100%)"};
  display: flex;
  flex-direction: column;
  align-items: center;
  justify-content: center;
  font-size: 12px;
  font-weight: 700;
  line-height: 16px;
  color: #3c3c3c;
  white-space: nowrap;
`;

const PanelScroll = styled.div`
  width: 36px;
  flex: none;
  margin-right: 1px;
  display: flex;
  flex-direction: column;
  border-left: 1px solid ${edge};
  border-right: 1px solid ${edge};
`;

const StatusBar = styled.div`
  flex: 1;
  margin-top: 6px;
  border-top: 1px solid #8ba0b2;
  display: flex;
  align-items: center;
  padding: 0 4px 0 5px;
`;

const HostInfo = styled.div`
  width: 219px;
  flex: none;
  margin-left: 8px;
  font-size: 11.6px;
  font-weight: 700;
  line-height: 16px;
  color: #3c3c40;
  white-space: nowrap;
`;

const KodList = styled.div`
  display: grid;
  grid-template-columns: repeat(5, 67px);
  width: 335px;
  flex: none;
`;

const Kod = styled.div`
  display: flex;
  align-items: center;
  gap: 5px;
  font-size: 11.3px;
  font-weight: 700;
  color: #a6a6a6;
`;

const KodRadio = styled.div`
  width: 12px;
  height: 12px;
  border-radius: 50%;
  border: 1px solid #9a9a9a;
`;

const Lamps = styled.div`
  margin-left: 119px;
  display: flex;
  gap: 24px;
`;

const Lamp = styled.div`
  width: 12px;
  height: 12px;
  border-radius: 50%;
  border: 1px solid #7d93a8;
  background: linear-gradient(180deg, #f4f7fa 0%, #c8d8e8 100%);
`;

const AdminBlock = styled.div`
  margin-left: auto;
  display: flex;
  align-items: center;
  gap: 4px;
`;

const AdminName = styled.div`
  padding-top: 2px;
  font-size: 12px;
  font-weight: 700;
  color: #3c3c40;
`;
